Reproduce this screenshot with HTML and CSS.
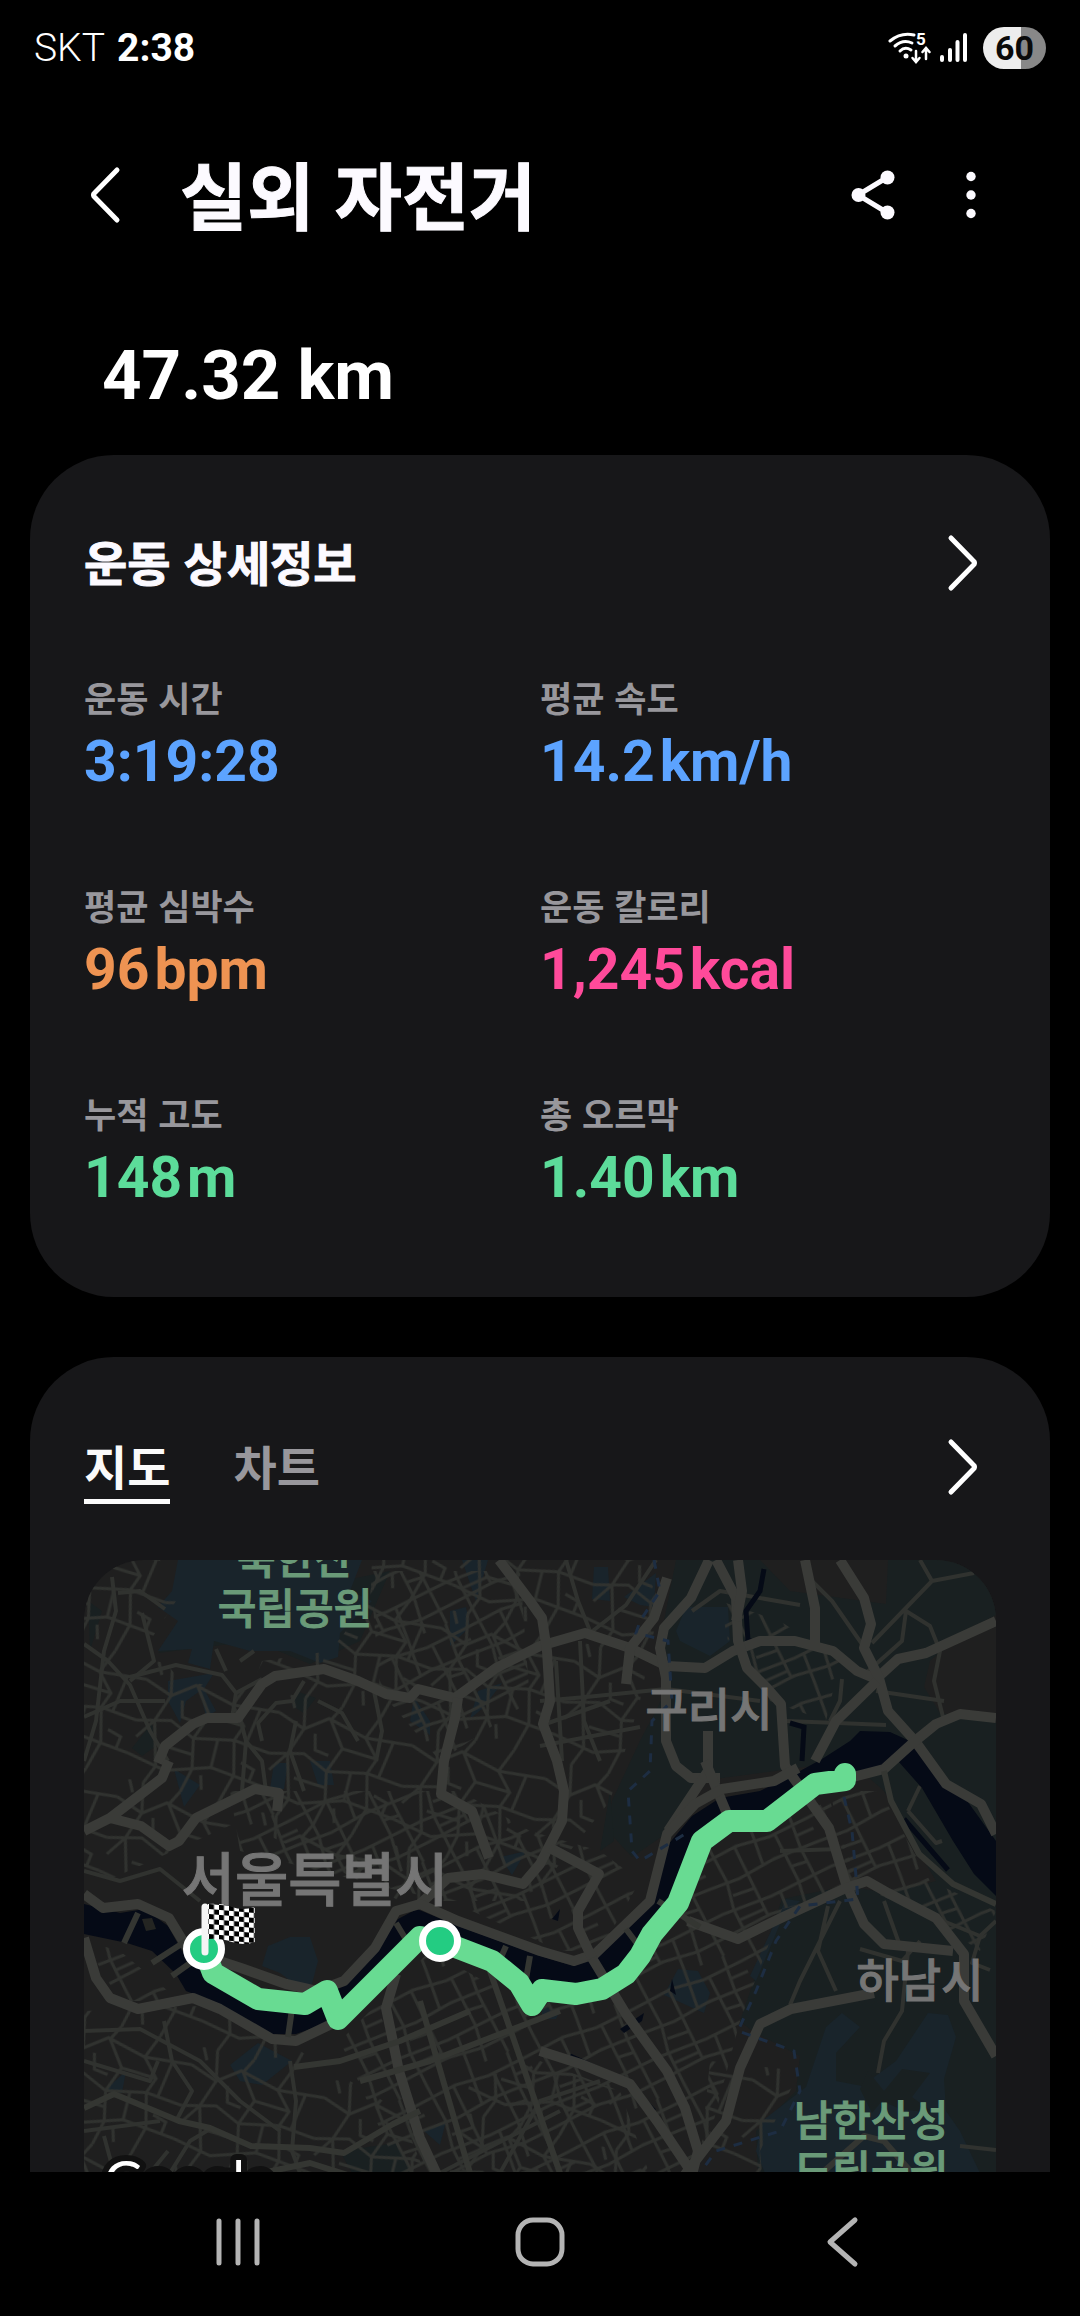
FILE: index.html
```html
<!DOCTYPE html>
<html lang="ko">
<head>
<meta charset="utf-8">
<meta name="viewport" content="width=device-width, initial-scale=1">
<title>실외 자전거</title>
<link rel="stylesheet" href="styles.css">
</head>
<body>

<div class="status">
    <span class="carrier">SKT</span>
    <span class="clock">2:38</span>
    <div class="status-icons">
        <svg class="wifi" width="44" height="34" viewBox="0 0 44 34">
            <g fill="none" stroke="#fff" stroke-width="3" stroke-linecap="round">
                <path d="M3 10Q14 1 27 4"/>
                <path d="M8 15Q16 8 25 12"/>
                <path d="M13 20Q18 15 24 19"/>
                <path d="M29 20V30M25.500 27L29 31L32.500 27" stroke-width="2.500"/>
                <path d="M39 28V18M35.500 21L39 17L42.500 21" stroke-width="2.500"/>
            </g>
            <circle cx="19" cy="25" r="2.500" fill="#fff"/>
            <text x="29" y="14" class="wifi-gen">5</text>
        </svg>
        <svg class="signal" width="28" height="34" viewBox="0 0 28 34">
            <path d="M3 26V29M11 19V29M18.500 11V29M26 4V29" fill="none" stroke="#fff" stroke-width="4" stroke-linecap="round"/>
        </svg>
        <span class="battery">60</span>
    </div>
</div>

<main>
    <header class="appbar">
        <button class="icon-btn" aria-label="뒤로">
            <svg width="32" height="60" viewBox="0 0 32 60"><path class="chevron" d="M28 5L5 28.500Q4 30 5 31.500L28 55"/></svg>
        </button>
        <h1>실외 자전거</h1>
        <button class="icon-btn share" aria-label="공유">
            <svg width="48" height="56" viewBox="0 0 48 56">
                <path d="M38 10.500L9 28L38 45.500" fill="none" stroke="#fcfaff" stroke-width="5"/>
                <g fill="#fcfaff"><circle cx="9.500" cy="28" r="7"/><circle cx="38.500" cy="10.500" r="7"/><circle cx="38.500" cy="45.500" r="7"/></g>
            </svg>
        </button>
        <button class="icon-btn" aria-label="더보기">
            <svg width="20" height="56" viewBox="0 0 20 56" fill="#fcfaff"><circle cx="10" cy="9.500" r="4.700"/><circle cx="10" cy="28" r="4.700"/><circle cx="10" cy="46.500" r="4.700"/></svg>
        </button>
    </header>

    <p class="distance">47.32 km</p>

    <section class="card">
        <div class="card-head">
            <h2>운동 상세정보</h2>
            <a class="more" href="#detail" aria-label="운동 상세정보">
                <svg width="32" height="60" viewBox="0 0 32 60"><path class="chevron" d="M4 5L27 28.500Q28 30 27 31.500L4 55"/></svg>
            </a>
        </div>
        <dl class="stats">
            <div><dt>운동 시간</dt><dd class="blue">3:19:28</dd></div>
            <div><dt>평균 속도</dt><dd class="blue">14.2<span>km/h</span></dd></div>
            <div><dt>평균 심박수</dt><dd class="orange">96<span>bpm</span></dd></div>
            <div><dt>운동 칼로리</dt><dd class="pink">1,245<span>kcal</span></dd></div>
            <div><dt>누적 고도</dt><dd class="green">148<span>m</span></dd></div>
            <div><dt>총 오르막</dt><dd class="green">1.40<span>km</span></dd></div>
        </dl>
    </section>

    <section class="card">
        <div class="card-head tabs-head">
            <div class="tabs">
                <button class="tab active">지도</button>
                <button class="tab">차트</button>
            </div>
            <a class="more" href="#map" aria-label="지도">
                <svg width="32" height="60" viewBox="0 0 32 60"><path class="chevron" d="M4 5L27 28.500Q28 30 27 31.500L4 55"/></svg>
            </a>
        </div>

        <svg class="map" viewBox="84 1559 912 700">
            <defs>
                <pattern id="blocks" class="grid" width="118" height="104" patternUnits="userSpaceOnUse" patternTransform="rotate(-24)">
                    <path d="M0 12L40 9L74 14L118 12M0 38L30 40L70 36L118 38M0 66L52 69L118 66M0 88L44 85L80 90L118 88M14 0L17 38L12 66L14 104M38 9L41 85M60 0L57 37M62 69L60 104M80 14L83 66L78 104M101 0L98 38L102 104M98 24H118M17 53L40 55M83 50L100 52M14 78H42"/>
                </pattern>
                <pattern id="lanes" class="grid" width="137" height="121" patternUnits="userSpaceOnUse" patternTransform="rotate(14)">
                    <path d="M0 20L28 30L50 14L90 24L137 20M0 62L34 54L60 66L100 58L137 62M0 96L40 104L84 90L137 96M22 0L28 30L18 58L30 102L22 121M60 0L52 15L70 40L60 66L66 96L60 121M100 0L90 24L106 42L100 58L108 92L100 121M70 40L106 42M18 58L4 78M30 80L62 82M84 62V90M118 22L112 60M8 0L14 12M40 32L44 48L58 50M112 78L126 82L124 96M76 100L80 114"/>
                </pattern>
                <pattern id="checks" width="10" height="10" patternUnits="userSpaceOnUse" patternTransform="translate(209 1903) skewY(5)">
                    <path d="M0 0H10V10H0Z" fill="#fff"/>
                    <path d="M0 0H5V5H0ZM5 5H10V10H5Z" fill="#000"/>
                </pattern>
            </defs>

            <path d="M84 1559H996V2259H84Z" fill="#1f1f1f"/>

            <!-- green belt -->
            <g fill="#192021">
                <path d="M676 1559H760L790 1590L886 1603L888 1559H996V1614L960 1632L930 1660L924 1686L940 1712L996 1722V2259H800L758 2172L756 2130L796 2090L800 2055L752 2030L740 2020L782 1898L846 1885L888 1892L936 1880L884 1790L850 1760L700 1780L670 1830L632 1856L608 1830L612 1800L640 1740L666 1690L660 1640Z"/>
                <path d="M244 1600L390 1570L360 1640L310 1663L254 1640L158 1652L190 1620Z"/>
                <path d="M88 1600L102 1610L90 1650ZM132 1747L152 1722L156 1745L142 1755ZM296 1690L316 1697L304 1712L292 1705ZM340 2150L396 2142L412 2172H352Z"/>
                <path d="M610 1790L614 1840L600 1850Z"/>
            </g>
            <g fill="#19242b">
                <path d="M178 1559H362L350 1590L372 1600L340 1632L338 1656L320 1662L290 1650L250 1650L214 1640L210 1668L188 1662L192 1648L158 1650L178 1620L158 1606L172 1590Z"/>
                <path d="M168 1680L214 1672L204 1688L216 1710L206 1716L200 1690L186 1700L180 1722L168 1700Z"/>
                <path d="M462 1559H488L476 1600ZM450 1610L466 1606L470 1626L450 1645ZM478 1690L502 1682L484 1706L470 1718ZM414 1696L430 1720V1734L410 1720Z"/>
                <path d="M594 1566H608L610 1600L592 1598ZM624 1596L656 1572L654 1606L640 1604ZM686 1606H728L730 1640L710 1655L680 1640L676 1630Z"/>
                <path d="M174 1768L200 1784L184 1806ZM274 1762H288L284 1788H270ZM310 1760H330L334 1784H318ZM500 1856L526 1850L512 1874Z"/>
                <path d="M262 1965L268 1945L290 1936H310L318 1960L312 1983L296 1984L280 1972Z"/>
                <path d="M230 2064L258 2042L292 2060L262 2084L240 2080ZM104 2090L126 2070L122 2092ZM424 2130L446 2120L440 2144ZM542 2004L560 2010L556 2018H542Z"/>
                <path d="M678 1968L698 1970L710 1992L704 2012L664 1994ZM786 1898L800 1900L782 1918L756 1980L750 1975Z"/>
                <path d="M826 2026L842 2012L860 2026L836 2052V2080L862 2085L896 2060L928 2012L948 2014L956 2036L944 2078L946 2110L960 2130L980 2172V2259H800L756 2150L762 2120L806 2086Z"/>
            </g>
            <path d="M868 2070L884 2090L902 2068L930 2072L912 2096L934 2112L900 2108L882 2100L872 2112L860 2088Z" fill="#192021"/>

            <!-- side streets -->
            <g>
                <path fill="url(#lanes)" d="M84 1559H160L176 1600L150 1640L180 1680L250 1690L262 1660L330 1650L370 1600L372 1559H640L660 1600L640 1700L610 1800L530 1900L400 1900L240 1820L84 1890Z"/>
                <path fill="url(#blocks)" d="M230 1790L460 1790L530 1830L600 1850L640 1880L600 1950L560 1950L450 1900L400 1890L240 1850ZM370 1570H520L530 1700L440 1760L380 1690Z"/>
                <path fill="url(#blocks)" d="M340 2040L430 1950L520 2000L620 1990L700 1850L830 1800L860 1890L782 1908L740 2020L700 2172H520L400 2172Z"/>
                <path fill="url(#blocks)" d="M84 1940L120 1950L180 2000L120 2000ZM720 1600L780 1620L840 1660L826 1720L770 1700L730 1650ZM830 1790L880 1790L930 1880L996 1910L980 1950L936 1920L850 1880Z"/>
                <path fill="url(#lanes)" d="M84 2010L200 2005L300 2050L400 2110L460 2259H84ZM540 2060L620 2090L680 2259H430L470 2080ZM710 2060L800 2070L760 2150L770 2259H690Z"/>
            </g>
            <g class="minor">
                <path d="M84 1643L108 1660L130 1684L150 1730L168 1760M112 1576L116 1610L104 1650L96 1720L84 1760M118 1592L140 1590L165 1608M142 1612L154 1660L130 1680M84 1716L120 1700L165 1700"/>
                <path d="M130 1676L176 1664L222 1674L236 1692L232 1717M236 1692L262 1678M216 1648L226 1670M240 1660L254 1650M240 1717L246 1740L242 1790M246 1740L262 1760L266 1790M304 1680L292 1700L276 1702L258 1722L262 1740M318 1700L342 1712L358 1740M296 1720L290 1750L304 1790M374 1690L382 1730L376 1760"/>
                <path d="M610 1700L540 1725M540 1700L586 1696L666 1688L760 1700M556 1660L562 1760M580 1640L584 1720L600 1760M540 1745L640 1726M566 1559L578 1600L590 1630M590 1632L626 1604L656 1559M692 1610L720 1590L800 1604M812 1580L832 1600L864 1646M920 1559L932 1580L872 1642M932 1580L974 1572M906 1610L902 1640L866 1672M906 1610L930 1625L940 1650L934 1680L944 1720M876 1690L944 1700M842 1678L840 1700L830 1720M785 1720L838 1722L886 1724"/>
                <path d="M780 1850L840 1848M840 1900L800 1980L790 2004M828 1905L818 1950L836 1990M860 1948L902 1960L920 1940M908 1950L902 2010L884 2040L878 2072M936 1917L980 1935L996 1920M980 1935L972 1962L990 1969M960 2145L996 2149M884 1900L900 1945M908 1810L920 1785M908 1810L936 1842L942 1840"/>
                <path d="M84 1870L120 1880L160 1868L200 1900M84 2030L140 2028L200 2060L240 2100L280 2130M164 2020L172 2060L192 2090L176 2120M84 2060L150 2080L158 2060M290 2060L296 2100L292 2150M292 2150L300 2172M84 2130L160 2120M104 2135L114 2172M170 2172L190 2140L210 2128M150 2172L168 2150M440 2172L560 2110M500 2172L540 2100L600 2080"/>
            </g>

            <!-- Han river -->
            <g fill="#050a16">
                <path d="M84 1903L120 1912L145 1908L168 1925L182 1950L214 1980L260 2000L320 1998L348 1978L378 1948L398 1918L417 1908L458 1925L540 1955L574 1965L597 1955L650 1905L667 1845L692 1815L720 1797L760 1790L800 1770L822 1758L850 1740L860 1730L890 1731L912 1741L926 1760L940 1783L960 1790L996 1840V1895L974 1873L953 1840L922 1787L898 1760L870 1768L830 1780L770 1820L722 1825L705 1845L690 1870L680 1900L650 1940L630 1980L597 1998L540 1995L520 1985L500 1965L450 1935L415 1930L341 2017L296 2033H272L248 2020L220 2003L186 1990L176 1973L152 1950L127 1942L84 1933Z"/>
                <path d="M620 2028L644 2012L642 2020L624 2032ZM672 1978L676 1994L670 1990ZM552 1918L560 1908L558 1920Z"/>
            </g>
            <path d="M764 1568L760 1590L746 1610L748 1640L752 1640M790 1722L804 1726L802 1760M904 1818L948 1869M570 2055L626 2080L654 2110" fill="none" stroke="#050a16" stroke-width="5"/>
            <path d="M142 1918L152 1917L156 1928L146 1930Z" fill="#242522"/>

            <g class="major">
                <path d="M158 1762L165 1745L193 1723L207 1717H238L262 1683L275 1675L324 1668L358 1680L386 1693L410 1697L418 1688L455 1697L496 1667L540 1645L585 1632L630 1647L667 1665L705 1667L733 1650L760 1640H795L833 1650L857 1670L876 1678L898 1658L926 1652L996 1620"/>
                <path d="M458 1697L455 1717L444 1760L441 1793L472 1810L489 1857"/>
                <path d="M499 1559L530 1600L542 1617L547 1650L550 1700L543 1723L557 1760L564 1790L562 1820L540 1863L523 1883L482 1873L448 1877L420 1903"/>
                <path d="M709 1559L691 1597L664 1627L660 1647L666 1677V1740L676 1765L691 1777H720"/>
                <path d="M667 1577L654 1617L630 1647L626 1683M708 1730V1770L668 1830"/>
                <path d="M716 1559L736 1597L738 1640L747 1667L767 1687L781 1703L785 1765L829 1827L846 1883L864 1923L884 1943L953 1950"/>
                <path d="M738 1559L742 1590L736 1620M805 1559L815 1607V1643M705 1760L730 1820"/>
                <path d="M840 1559L864 1597L871 1623L864 1647L879 1677L888 1710L915 1740L946 1783L981 1803L996 1833"/>
                <path d="M996 1717L960 1713L936 1723L915 1740L884 1768L845 1778M877 1680L836 1720L815 1760"/>
                <path d="M169 1760L162 1777L110 1817L84 1830M110 1817L141 1825L169 1845L179 1840L196 1817L255 1788L279 1792L277 1810"/>
                <path d="M84 1893L103 1907L138 1903L169 1917L189 1950L241 1967L286 1983L317 1990L344 1980L375 1947L396 1910L420 1903L458 1920L540 1950L574 1960L595 1953L650 1900L667 1833L695 1803L722 1788L774 1780L798 1767"/>
                <path d="M84 1937L96 1977L110 1997L138 2008L193 1997L220 2008L272 2038L296 2040L344 2017"/>
                <path d="M396 1973L386 2007L399 2070L420 2137L440 2180"/>
                <path d="M688 1920L738 1938L781 1917L846 1887L867 1880L888 1892L936 1917L964 1953V2000L996 2055"/>
                <path d="M592 1957L626 2013L667 2070L685 2107L698 2150L688 2190M874 1992L791 2008L760 2023L740 2067L726 2120L680 2180M540 2050L581 2063L630 2083L657 2120L692 2172"/>
                <path d="M550 1847L599 1873L578 1910V1927L592 1957"/>
            </g>
            <g class="medium">
                <path d="M138 1912L124 1942M186 1940L152 1962M200 1955L172 1975M292 2008L288 2036M396 1922L410 1945M506 1945L495 1970M530 1955L524 1990M626 1928L650 1960"/>
                <path d="M84 2107L114 2093L155 2110L179 2120L210 2127L251 2145L310 2147L344 2152L393 2123L420 2110M884 1770L891 1800L919 1853L953 1883L996 1903M262 2172L310 2162L360 2178M294 2066L340 2060L400 2040L470 2010M658 1900L700 1926M360 2080L430 2060L560 2010M420 2000L470 2172M490 1970L560 2172"/>
                <path d="M822 2172L864 2135L884 2140L912 2172"/>
            </g>
            <path d="M654 1559L660 1590L640 1620L636 1632L668 1640L672 1700L652 1720L650 1770L628 1790L632 1850L640 1860L690 1830M844 1796L852 1830L858 1898L800 1905L776 1940L756 1990L738 2030L794 2050L800 2090L780 2130L716 2150L700 2172" fill="none" stroke="#1d2d42" stroke-width="3" stroke-dasharray="9 9"/>

            <g class="park">
                <text x="295" y="1573">북한산</text>
                <text x="295" y="1623">국립공원</text>
                <text x="871" y="2135">남한산성</text>
                <text x="871" y="2185">도립공원</text>
            </g>
            <g class="city">
                <text x="709" y="1725">구리시</text>
                <text x="920" y="1996">하남시</text>
                <text x="315" y="1900" class="big">서울특별시</text>
            </g>

            <path class="route" d="M204 1948L213 1972L258 1998L305 2003L327 1990L338 2018L420 1936L440 1940L492 1960L519 1982L532 2004L542 1989L576 1993L602 1988L626 1973L640 1955L652 1933L678 1902L702 1840L729 1820H767L815 1783L845 1779V1773"/>
            <g fill="#23cc82" stroke="#fff" stroke-width="7">
                <circle cx="204" cy="1948" r="17.500"/>
                <circle cx="440" cy="1940" r="17.500"/>
            </g>
            <path d="M208 1903Q222 1902 232 1906T255 1906V1941Q244 1945 232 1941T208 1938Z" fill="url(#checks)"/>
            <path d="M205 1906V1951" stroke="#f4f4f4" stroke-width="7" stroke-linecap="round"/>

            <text x="104" y="2199" class="google">Google</text>
        </svg>
    </section>
</main>

<nav class="navbar">
    <button class="icon-btn" aria-label="최근 앱">
        <svg width="56" height="56" viewBox="0 0 56 56"><path d="M9 7V49M28 7V49M47 7V49"/></svg>
    </button>
    <button class="icon-btn" aria-label="홈">
        <svg width="56" height="56" viewBox="0 0 56 56"><rect x="6" y="6" width="44" height="44" rx="15"/></svg>
    </button>
    <button class="icon-btn" aria-label="뒤로">
        <svg width="56" height="56" viewBox="0 0 56 56"><path d="M41 6L16 28L41 50"/></svg>
    </button>
</nav>

</body>
</html>
```

FILE: styles.css
```css
* {
    box-sizing: border-box;
    margin: 0;
    padding: 0;
}
body {
    height: 100vh;
    display: flex;
    flex-direction: column;
    background: #000;
    color: #fcfaff;
    font-family: Roboto, "Noto Sans CJK KR", sans-serif;
}
button {
    border: 0;
    background: none;
    color: inherit;
    font: inherit;
}
svg {
    display: block;
}
h1, h2, dt, .tab {
    font-family: "Noto Sans CJK KR", sans-serif;
    font-weight: 700;
}
h1, h2 {
    padding-bottom: 6px;
    -webkit-text-stroke: 1px;
}

.status {
    flex: none;
    display: flex;
    align-items: center;
    gap: 12px;
    height: 96px;
    padding: 0 34px;
    color: #fff;
}
.carrier {
    font-size: 39px;
    font-weight: 300;
}
.clock {
    font-size: 39px;
    font-weight: 700;
}
.status-icons {
    display: flex;
    align-items: center;
    gap: 8px;
    margin-left: auto;
}
.wifi-gen {
    fill: #fff;
    font-size: 17px;
    font-weight: 700;
}
.battery {
    width: 63px;
    height: 42px;
    margin-left: 8px;
    border-radius: 21px;
    background: linear-gradient(90deg, #ededed 60%, #888 60%);
    color: #0a0a0a;
    font-size: 34px;
    font-weight: 700;
    line-height: 42px;
    text-align: center;
}

main {
    flex: 1;
    min-height: 0;
    overflow: hidden;
    padding: 0 30px;
}
.appbar {
    display: flex;
    align-items: center;
    height: 198px;
    padding: 0 69px 0 59px;
}
.appbar h1 {
    margin-left: 59px;
    font-size: 73px;
    line-height: 104px;
}
.share {
    margin-left: auto;
    margin-right: 64px;
}
.chevron {
    fill: none;
    stroke: #fff;
    stroke-width: 5;
    stroke-linecap: round;
}
.distance {
    height: 161px;
    padding-left: 72px;
    color: #fff;
    font-size: 69px;
    font-weight: 700;
    line-height: 164px;
}

.card {
    padding: 0 54px 83px;
    margin-bottom: 60px;
    border-radius: 84px;
    background: #171719;
}
.card-head {
    display: flex;
    align-items: center;
    justify-content: space-between;
    height: 216px;
}
.card-head h2 {
    font-size: 47px;
}
.more {
    margin-right: 17px;
}
.stats {
    display: grid;
    grid-template-columns: 1fr 1fr;
    row-gap: 81px;
}
.stats dt {
    margin-bottom: 3px;
    color: #98979c;
    font-size: 35px;
    line-height: 52px;
}
.stats dd {
    font-size: 57px;
    font-weight: 700;
    line-height: 72px;
}
.stats dd span {
    margin-left: 5px;
}
.blue { color: #5ca3ff; }
.orange { color: #ee9352; }
.pink { color: #ff4a9a; }
.green { color: #5cdc9a; }

.tabs-head {
    height: 203px;
    padding-top: 17px;
}
.tabs {
    display: flex;
    gap: 63px;
}
.tab {
    height: 74px;
    padding-bottom: 4px;
    border-top: 5px solid transparent;
    border-bottom: 5px solid transparent;
    color: #98979c;
    font-size: 47px;
    line-height: 60px;
}
.tab.active {
    border-bottom-color: #fafafa;
    color: #fafafa;
}

.map {
    width: 100%;
    border-radius: 60px;
}
.grid path {
    fill: none;
    stroke: #30322f;
    stroke-width: 3;
}
.minor, .medium, .major {
    fill: none;
    stroke: #30322f;
    stroke-width: 4;
    stroke-linejoin: round;
}
.medium {
    stroke: #343632;
    stroke-width: 6;
}
.major {
    stroke: #3a3b38;
    stroke-width: 10;
}
.route {
    fill: none;
    stroke: #68db92;
    stroke-width: 22;
    stroke-linejoin: round;
    stroke-linecap: round;
}
.park, .city {
    font-family: "Noto Sans CJK KR", sans-serif;
    font-weight: 500;
    stroke-width: 1;
    text-anchor: middle;
}
.park {
    fill: #6a9a78;
    stroke: #6a9a78;
    font-size: 42px;
}
.city {
    fill: #757575;
    stroke: #757575;
    font-size: 46px;
}
.city .big {
    font-size: 58px;
}
.google {
    fill: #fff;
    stroke: #111;
    stroke-width: 12;
    stroke-linejoin: round;
    paint-order: stroke;
    font-family: Lato, sans-serif;
    font-size: 54px;
}

.navbar {
    flex: none;
    display: flex;
    align-items: center;
    justify-content: center;
    gap: 246px;
    height: 144px;
    padding-bottom: 4px;
    background: #000;
}
.navbar svg {
    fill: none;
    stroke: #b4b4b4;
    stroke-width: 5;
    stroke-linecap: round;
    stroke-linejoin: round;
}
```
